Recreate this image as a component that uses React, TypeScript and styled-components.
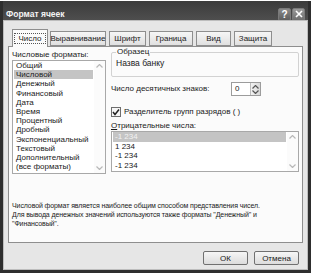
import React from 'react'
import styled, { createGlobalStyle } from 'styled-components'

const Global = createGlobalStyle`
  html, body {
    margin: 0;
    padding: 0;
    background: #ffffff;
  }
  body {
    font-family: "Liberation Sans", Arial, sans-serif;
    font-size: 8px;
    color: #1a1a1a;
  }
`

const Window = styled.div`
  width: 311px;
  height: 272px;
  margin-top: 1px;
  box-sizing: border-box;
  border: 3px solid #2e2e2e;
  border-top: 0;
  background: #d6d6d6;
  display: flex;
  flex-direction: column;
`

const TitleBar = styled.div`
  height: 19px;
  flex: none;
  display: flex;
  align-items: center;
  padding: 0 3px 0 3px;
  background: linear-gradient(#3b3b3b, #4e4e4e);
`

const Title = styled.div`
  flex: 1;
  color: #f4f4f4;
  font-weight: bold;
  font-size: 8.5px;
  padding-top: 7px;
`

const CaptionButton = styled.div<{ $close?: boolean }>`
  width: 13px;
  height: 13px;
  margin-left: 1px;
  margin-top: 7px;
  border: 1px solid #7a7a7a;
  box-sizing: border-box;
  border-radius: 2px;
  background: ${({ $close }) => ($close ? 'linear-gradient(#9a9a9a, #6e6e6e)' : 'linear-gradient(#8a8a8a, #5e5e5e)')};
  color: #ffffff;
  font-weight: bold;
  font-size: 10px;
  display: flex;
  align-items: center;
  justify-content: center;
`

const Body = styled.div`
  flex: 1;
  background: #e6e6e6;
  border: 1px solid #bdbdbd;
  padding: 8px 4px 0 4px;
  display: flex;
  flex-direction: column;
`

const TabRow = styled.div`
  display: flex;
  padding-left: 4px;
  height: 17px;
  align-items: flex-end;
`

const Tab = styled.div<{ $active?: boolean; $w: number }>`
  width: ${({ $w }) => $w}px;
  height: ${({ $active }) => ($active ? 18 : 15)}px;
  margin-right: ${({ $active }) => ($active ? 2 : 3)}px;
  margin-bottom: ${({ $active }) => ($active ? -1 : 0)}px;
  box-sizing: border-box;
  border: 1px solid #8e8e8e;
  border-bottom: ${({ $active }) => ($active ? '0' : '1px solid #8e8e8e')};
  background: ${({ $active }) => ($active ? '#fbfbfb' : 'linear-gradient(#f6f6f6, #e0e0e0)')};
  display: flex;
  align-items: center;
  justify-content: center;
  font-size: 8px;
  position: relative;
  z-index: ${({ $active }) => ($active ? 1 : 0)};
`

const TabLabel = styled.span<{ $active?: boolean }>`
  padding: 0 3px;
  border: ${({ $active }) => ($active ? '1px dotted #555' : '0')};
`

const Panel = styled.div`
  height: 197px;
  box-sizing: border-box;
  border: 1px solid #8e8e8e;
  background: #fbfbfb;
  padding: 2px 3px 0 3px;
  display: flex;
  flex-direction: column;
`

const TopRow = styled.div`
  display: flex;
  gap: 5px;
`

const LeftCol = styled.div`
  width: 94px;
  display: flex;
  flex-direction: column;
`

const RightCol = styled.div`
  flex: 1;
  display: flex;
  flex-direction: column;
`

const Label = styled.div<{ $mt?: number }>`
  margin-top: ${({ $mt }) => $mt ?? 0}px;
  font-size: 8px;
  line-height: 10px;
  white-space: nowrap;
`

const Ul = styled.span`
  text-decoration: underline;
`

const ListBox = styled.div<{ $h: number }>`
  height: ${({ $h }) => $h}px;
  box-sizing: border-box;
  border: 1px solid #a8a8a8;
  background: #ffffff;
  display: flex;
`

const ListItems = styled.div`
  flex: 1;
  padding: 0 1px;
  overflow: hidden;
`

const Item = styled.div<{ $sel?: boolean; $h?: number; $light?: boolean }>`
  height: ${({ $h }) => $h ?? 9.2}px;
  line-height: ${({ $h }) => $h ?? 9.2}px;
  padding-left: 2px;
  font-size: 8px;
  white-space: nowrap;
  background: ${({ $sel }) => ($sel ? '#c4c4c4' : 'transparent')};
  color: ${({ $light }) => ($light ? '#f2f2f2' : '#1a1a1a')};
`

const Scroll = styled.div`
  width: 11px;
  display: flex;
  flex-direction: column;
  justify-content: space-between;
  align-items: center;
  background: #fbfbfb;
  padding: 3px 0;
`

const Group = styled.div`
  height: 25px;
  box-sizing: border-box;
  border: 1px solid #d2d2d2;
  border-radius: 2px;
  margin-top: 3px;
  padding: 0 4px;
  position: relative;
`

const Legend = styled.span`
  position: absolute;
  top: -6px;
  left: 4px;
  background: #fbfbfb;
  padding: 0 1px;
  font-size: 8px;
  line-height: 10px;
`

const Sample = styled.div`
  margin-top: 5px;
  font-size: 8.5px;
`

const DecRow = styled.div`
  display: flex;
  align-items: center;
  justify-content: space-between;
  margin-top: 5px;
  width: 150px;
`

const Spinner = styled.div`
  width: 30px;
  height: 14px;
  box-sizing: border-box;
  border: 1px solid #9c9c9c;
  background: #ffffff;
  display: flex;
`

const SpinValue = styled.div`
  flex: 1;
  padding-left: 3px;
  line-height: 12px;
  font-size: 8px;
`

const SpinBtns = styled.div`
  width: 9px;
  display: flex;
  flex-direction: column;
  background: linear-gradient(90deg, #f2f2f2, #d8d8d8);
  border-left: 1px solid #bdbdbd;
  align-items: center;
  justify-content: center;
  gap: 1px;
`

const CheckRow = styled.div`
  display: flex;
  align-items: center;
  gap: 3px;
  margin-top: 11px;
`

const Box = styled.div`
  width: 10px;
  height: 10px;
  box-sizing: border-box;
  border: 1px solid #6e6e6e;
  background: #f6f6f6;
  display: flex;
  align-items: center;
  justify-content: center;
`

const Description = styled.div`
  margin-top: 27px;
  font-size: 7px;
  line-height: 9px;
  letter-spacing: -0.1px;
`

const ButtonRow = styled.div`
  display: flex;
  justify-content: flex-end;
  gap: 6px;
  padding: 8px 4px 0 0;
`

const Button = styled.div<{ $w: number }>`
  width: ${({ $w }) => $w}px;
  height: 14px;
  box-sizing: border-box;
  border: 1px solid #707070;
  border-radius: 2px;
  background: linear-gradient(#f6f6f6, #dcdcdc);
  display: flex;
  align-items: center;
  justify-content: center;
  font-size: 8px;
`

const Arrow = ({ up, color = '#b8b8b8' }: { up?: boolean; color?: string }) => (
  <svg width="7" height="4" viewBox="0 0 7 4">
    <path d={up ? 'M0.5 3.5 L3.5 0.5 L6.5 3.5' : 'M0.5 0.5 L3.5 3.5 L6.5 0.5'} fill="none" stroke={color} strokeWidth="1.2" />
  </svg>
)

const formats = [
  'Общий',
  'Числовой',
  'Денежный',
  'Финансовый',
  'Дата',
  'Время',
  'Процентный',
  'Дробный',
  'Экспоненциальный',
  'Текстовый',
  'Дополнительный',
  '(все форматы)',
]

const tabs = [
  { t: 'Число', w: 36 },
  { t: 'Выравнивание', w: 56 },
  { t: 'Шрифт', w: 37 },
  { t: 'Граница', w: 44 },
  { t: 'Вид', w: 35 },
  { t: 'Защита', w: 38 },
]

export default function App() {
  return (
    <>
      <Global />
      <Window>
        <TitleBar>
          <Title>Формат ячеек</Title>
          <CaptionButton>?</CaptionButton>
          <CaptionButton $close>
            <svg width="8" height="8" viewBox="0 0 8 8">
              <path d="M1 1 L7 7 M7 1 L1 7" stroke="#fff" strokeWidth="1.6" />
            </svg>
          </CaptionButton>
        </TitleBar>
        <Body>
          <TabRow>
            {tabs.map((tab, i) => (
              <Tab key={tab.t} $w={tab.w} $active={i === 0}>
                <TabLabel $active={i === 0}>{tab.t}</TabLabel>
              </Tab>
            ))}
          </TabRow>
          <Panel>
            <TopRow>
              <LeftCol>
                <Label $mt={1}>Числовые форматы:</Label>
                <ListBox $h={114}>
                  <ListItems>
                    {formats.map((f, i) => (
                      <Item key={f} $sel={i === 1}>
                        {f}
                      </Item>
                    ))}
                  </ListItems>
                  <Scroll>
                    <Arrow up />
                    <Arrow />
                  </Scroll>
                </ListBox>
              </LeftCol>
              <RightCol>
                <Group>
                  <Legend>Образец</Legend>
                  <Sample>Назва банку</Sample>
                </Group>
                <DecRow>
                  <Label>Число десятичных знаков:</Label>
                  <Spinner>
                    <SpinValue>0</SpinValue>
                    <SpinBtns>
                      <Arrow up color="#555" />
                      <Arrow color="#555" />
                    </SpinBtns>
                  </Spinner>
                </DecRow>
                <CheckRow>
                  <Box>
                    <svg width="8" height="8" viewBox="0 0 8 8">
                      <path d="M1 4 L3 6.5 L7 1.5" fill="none" stroke="#222" strokeWidth="1.5" />
                    </svg>
                  </Box>
                  <Label>Разделитель групп разрядов ( )</Label>
                </CheckRow>
                <Label $mt={4}>
                  <Ul>О</Ul>трицательные числа:
                </Label>
                <ListBox $h={41}>
                  <ListItems>
                    <Item $sel $light $h={9.5}>-1 234</Item>
                    <Item $h={9.5}>1 234</Item>
                    <Item $h={9.5}>-1 234</Item>
                    <Item $h={9.5}>-1 234</Item>
                  </ListItems>
                  <Scroll>
                    <Arrow up />
                    <Arrow />
                  </Scroll>
                </ListBox>
              </RightCol>
            </TopRow>
            <Description>
              Числовой формат является наиболее общим способом представления чисел.
              <br />
              Для вывода денежных значений используются также форматы "Денежный" и
              <br />
              "Финансовый".
            </Description>
          </Panel>
          <ButtonRow>
            <Button $w={45}>ОК</Button>
            <Button $w={45}>Отмена</Button>
          </ButtonRow>
        </Body>
      </Window>
    </>
  )
}
